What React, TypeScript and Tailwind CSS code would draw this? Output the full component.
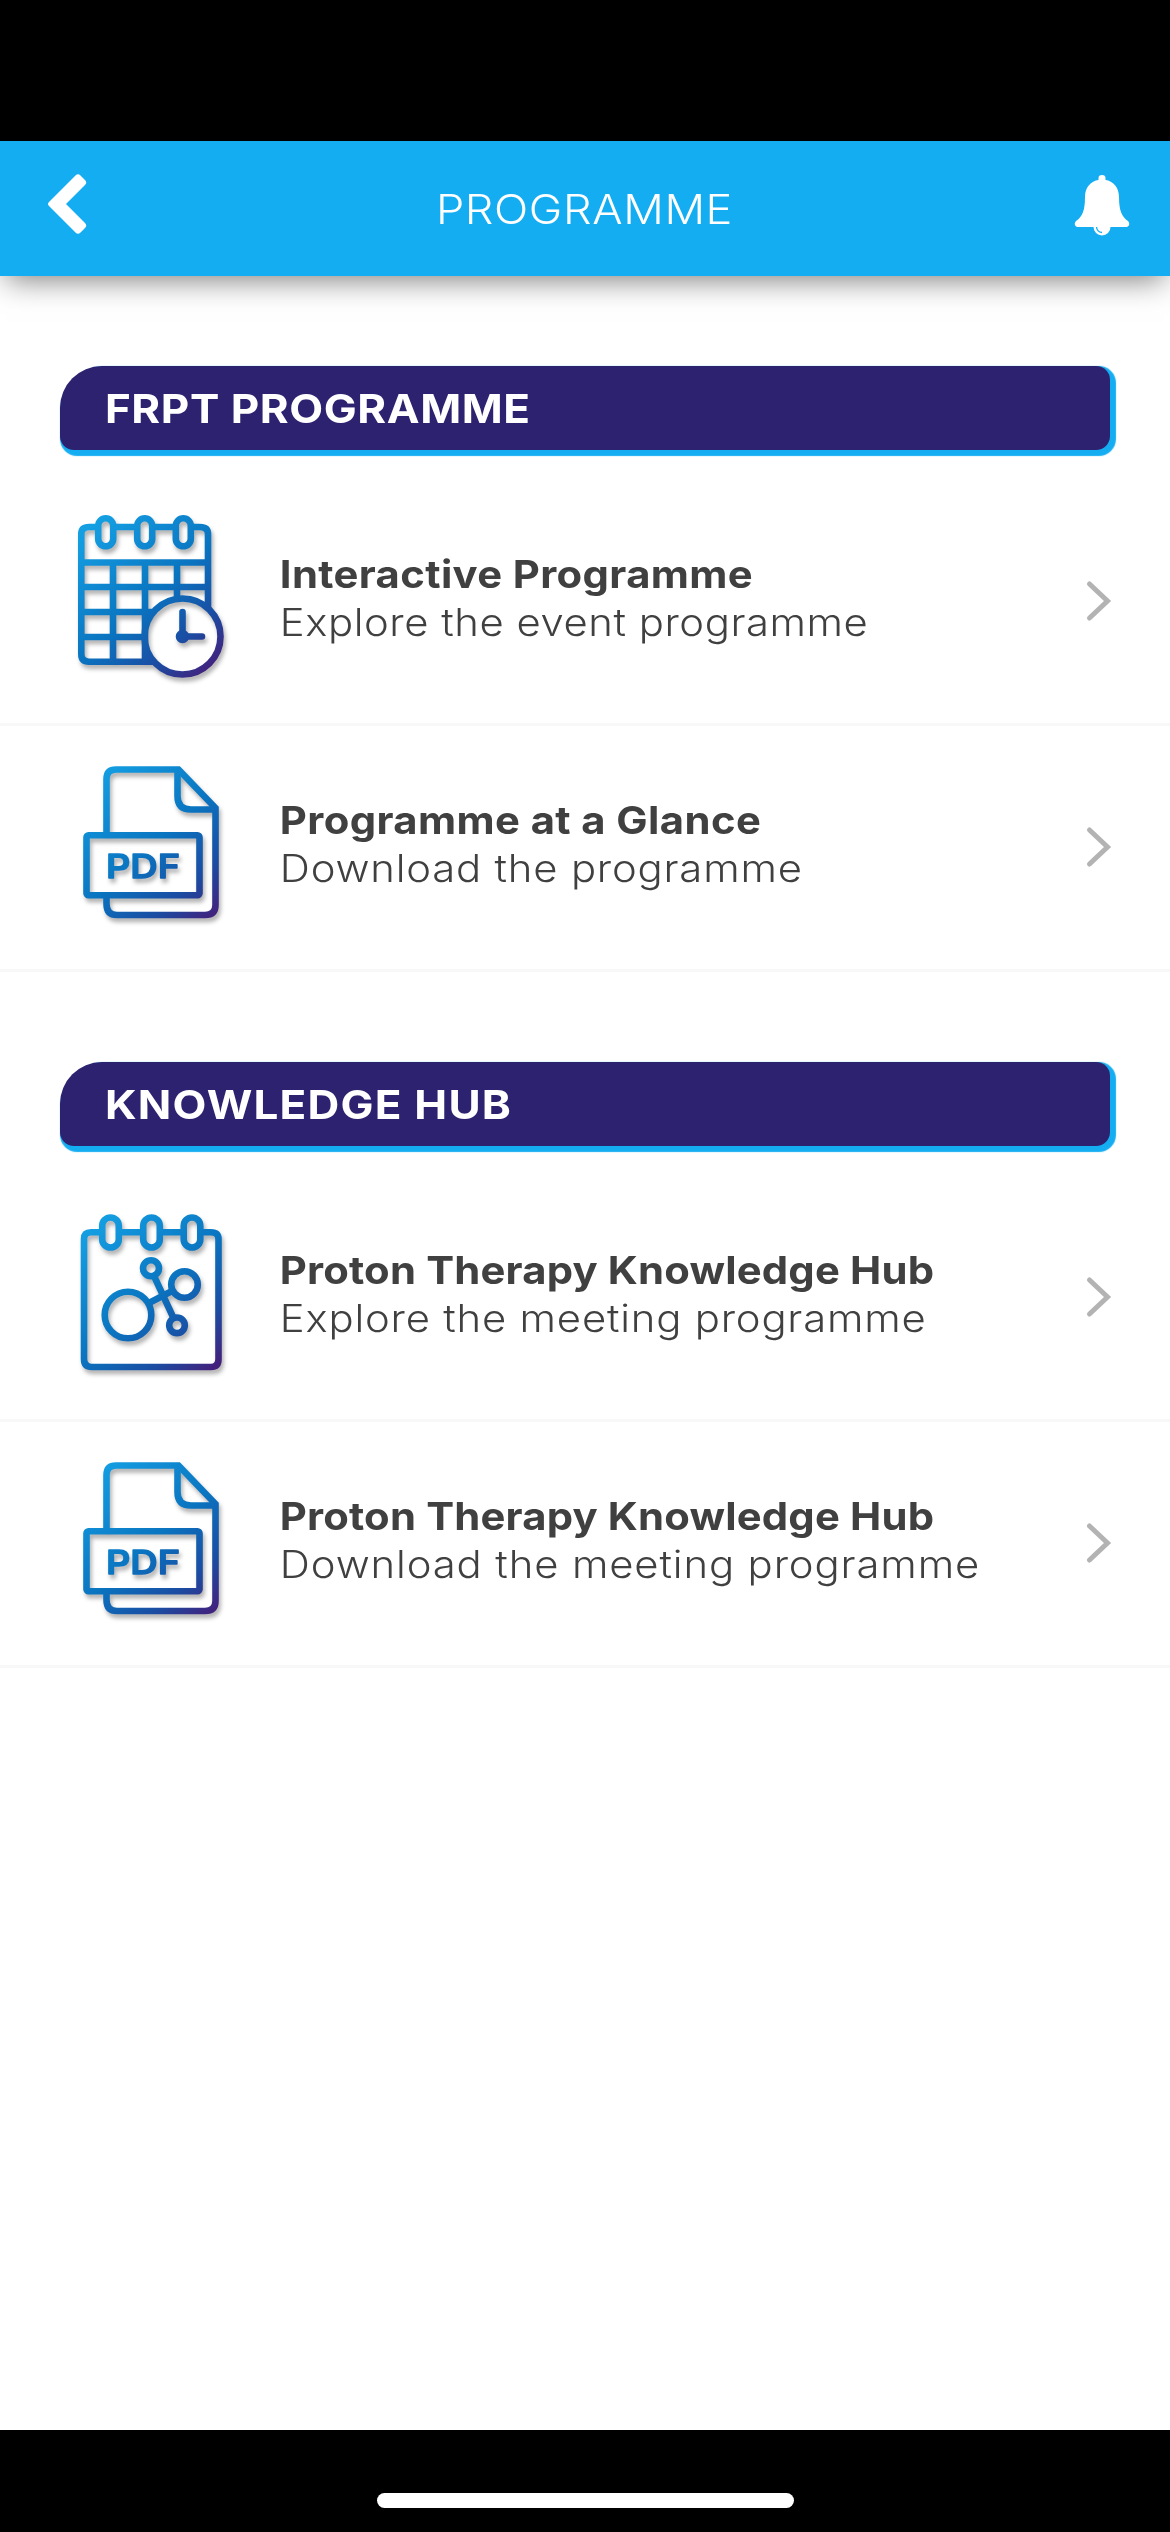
import { ReactNode } from 'react';

type IconName = 'calendar' | 'pdf' | 'hub';

interface MenuItem {
  icon: IconName;
  title: string;
  titleClass: string;
  subtitle: string;
  subtitleClass: string;
}

interface Section {
  heading: string;
  headingClass: string;
  items: MenuItem[];
}

const sections: Section[] = [
  {
    heading: 'FRPT PROGRAMME',
    headingClass: 'tracking-[0.5px]',
    items: [
      {
        icon: 'calendar',
        title: 'Interactive Programme',
        titleClass: 'tracking-[0.33px]',
        subtitle: 'Explore the event programme',
        subtitleClass: 'tracking-[0.5px]',
      },
      {
        icon: 'pdf',
        title: 'Programme at a Glance',
        titleClass: 'tracking-[0.36px]',
        subtitle: 'Download the programme',
        subtitleClass: 'tracking-[0.73px]',
      },
    ],
  },
  {
    heading: 'KNOWLEDGE HUB',
    headingClass: 'tracking-[1.1px]',
    items: [
      {
        icon: 'hub',
        title: 'Proton Therapy Knowledge Hub',
        titleClass: 'tracking-[0.16px]',
        subtitle: 'Explore the meeting programme',
        subtitleClass: 'tracking-[0.73px]',
      },
      {
        icon: 'pdf',
        title: 'Proton Therapy Knowledge Hub',
        titleClass: 'tracking-[0.16px]',
        subtitle: 'Download the meeting programme',
        subtitleClass: 'tracking-[0.8px]',
      },
    ],
  },
];

// Shared frame: every icon is drawn on a 200 grid in the same gradient
function IconFrame({ id, className, children }: { id: string; className: string; children: ReactNode }) {
  return (
    <svg
      width="200"
      height="200"
      viewBox="0 0 200 200"
      fill="none"
      stroke={`url(#${id})`}
      strokeWidth="6.6"
      className={`shrink-0 drop-shadow-[2px_4px_2px_rgba(0,0,0,0.3)] ${className}`}
    >
      <defs>
        <linearGradient id={id} gradientUnits="userSpaceOnUse" x1="28" y1="28" x2="154" y2="168">
          <stop offset="0" stopColor="#149fe3" />
          <stop offset="0.5" stopColor="#0a74c0" />
          <stop offset="0.78" stopColor="#1a4da3" />
          <stop offset="1" stopColor="#43207c" />
        </linearGradient>
      </defs>
      {children}
    </svg>
  );
}

function CalendarIcon({ id }: { id: string }) {
  return (
    <IconFrame id={id} className="mt-5">
      <path d="M35 27H29Q21.300 27 21.300 34V154Q21.300 161.700 29 161.700H94M55 27H74M94 27H113M133 27H140Q148 27 148 34V107" />
      <path d="M21 62.500H148M21 87H148M21 112H92M21 137H84M53 62V161M85 62V112M85 112V161M117 62V96" />
      {[45.7, 84.7, 123.3].map((x) => (
        <rect key={x} x={x - 7.5} y="18.300" width="15" height="28" rx="7.500" />
      ))}
      <circle cx="122.500" cy="136.500" r="38" />
      <path d="M122.500 112V136.500H142" strokeLinecap="round" />
      <circle cx="122.500" cy="136.500" r="3.500" />
    </IconFrame>
  );
}

function PdfIcon({ id }: { id: string }) {
  return (
    <IconFrame id={id} className="mt-6">
      <path d="M46.500 83V29Q46.500 19.500 56 19.500H118.500L155.500 58V155Q155.500 165 145 165H57Q46.500 165 46.500 154V147" />
      <path d="M117.500 20V46Q117.500 59.500 131 59.500H155" />
      <rect x="26.500" y="85.300" width="113" height="60" rx="2" />
      <text
        x="46"
        y="128"
        textLength="74"
        lengthAdjust="spacingAndGlyphs"
        fill={`url(#${id})`}
        strokeWidth="1.600"
        strokeLinejoin="round"
        className="text-[33px] font-medium"
      >
        PDF
      </text>
    </IconFrame>
  );
}

function HubIcon({ id }: { id: string }) {
  return (
    <IconFrame id={id} className="mt-6">
      <path d="M39 32.300H31Q24 32.300 24 39V159Q24 167 32 167H151Q158.500 167 158.500 159V39Q158.500 32.300 151 32.300H143M62 32.300H80M103 32.300H121" />
      {[50.5, 91.5, 132].map((x) => (
        <rect key={x} x={x - 8.3} y="17.500" width="16.600" height="30" rx="8.300" />
      ))}
      <circle cx="68" cy="115" r="23.300" />
      <circle cx="91" cy="68.300" r="8" />
      <circle cx="124.500" cy="84.500" r="13.300" />
      <circle cx="117" cy="125.300" r="7.800" />
      <path d="M94 76L113.500 118M89 103L112 91" />
    </IconFrame>
  );
}

const icons = { calendar: CalendarIcon, pdf: PdfIcon, hub: HubIcon };

function MenuRow({ item, id }: { item: MenuItem; id: string }) {
  const Icon = icons[item.icon];
  return (
    <li className="flex h-[246px] items-start border-b-3 border-[#f8f8f8] pl-[60px]">
      <Icon id={id} />
      <div className="min-w-0 flex-1 origin-left scale-x-110 pt-[70px] pl-[18px] text-[38px] leading-[48px] whitespace-nowrap text-[#404040]">
        <p className={`font-bold ${item.titleClass}`}>{item.title}</p>
        <p className={`font-light ${item.subtitleClass}`}>{item.subtitle}</p>
      </div>
      <svg
        width="30"
        height="44"
        viewBox="0 0 30 44"
        fill="none"
        stroke="#b3b3b3"
        strokeWidth="5"
        strokeLinecap="round"
        className="mt-[99px] mr-[55px] shrink-0"
      >
        <path d="M4.500 5L22.500 22L4.500 39" />
      </svg>
    </li>
  );
}

function SectionHeading({ section }: { section: Section }) {
  return (
    <div className="mx-[60px] h-[84px] rounded-tl-[42px] rounded-tr-[14px] rounded-b-[14px] bg-[#2d226f] pl-[45px] shadow-[3px_3px_1px_3px_#15adf1]">
      <h2 className={`origin-left scale-x-110 text-[40px] leading-[86px] font-bold text-white ${section.headingClass}`}>
        {section.heading}
      </h2>
    </div>
  );
}

export default function App() {
  return (
    <div className="flex h-[2532px] w-[1170px] flex-col overflow-hidden bg-white font-['Inter',sans-serif]">
      <div className="h-[141px] shrink-0 bg-black" />

      <header className="relative flex h-[135px] shrink-0 items-center justify-between bg-[#15adf1] pr-10 pl-12 shadow-[0_10px_28px_-6px_rgba(0,0,0,0.5)]">
        <svg width="39" height="60" viewBox="0 0 39 60" fill="#fff" className="-mt-[9px]">
          <path d="M1 28L27.500 1.500Q30 -1 32.500 1.500L37 6Q39.500 8.500 37 11L18 30L37 49Q39.500 51.500 37 54L32.500 58.500Q30 61 27.500 58.500L1 32Q-1 30 1 28Z" />
        </svg>
        <h1 className="scale-x-110 pt-[3px] pl-2 text-[41px] font-light tracking-[0.55px] text-white">PROGRAMME</h1>
        <svg width="56" height="61" viewBox="0 0 56 61" fill="#fff" className="-mt-[6px]">
          <path d="M24.500 5V3Q24.500 0 28 0Q31.500 0 31.500 3V5C39 6 45 12 45 22C45 36 48 42 54 46Q57 50 53 52H3Q-1 50 2 46C8 42 11 36 11 22C11 12 17 6 24.500 5Z" />
          <path d="M19.500 52A8.500 8.500 0 0 0 36.500 52Z" />
          <path d="M22.500 52Q23 57 28 57.500" fill="none" stroke="#15adf1" strokeWidth="1.300" />
        </svg>
      </header>

      <main className="flex-1">
        {sections.map((section, s) => (
          <section key={section.heading} className="pt-[90px]">
            <SectionHeading section={section} />
            <ul className="pt-[30px]">
              {section.items.map((item, i) => (
                <MenuRow key={i} item={item} id={`icon-${s}-${i}`} />
              ))}
            </ul>
          </section>
        ))}
      </main>

      <footer className="flex h-[102px] shrink-0 items-end justify-center bg-black pb-6">
        <div className="h-[15px] w-[417px] rounded-full bg-white" />
      </footer>
    </div>
  );
}
